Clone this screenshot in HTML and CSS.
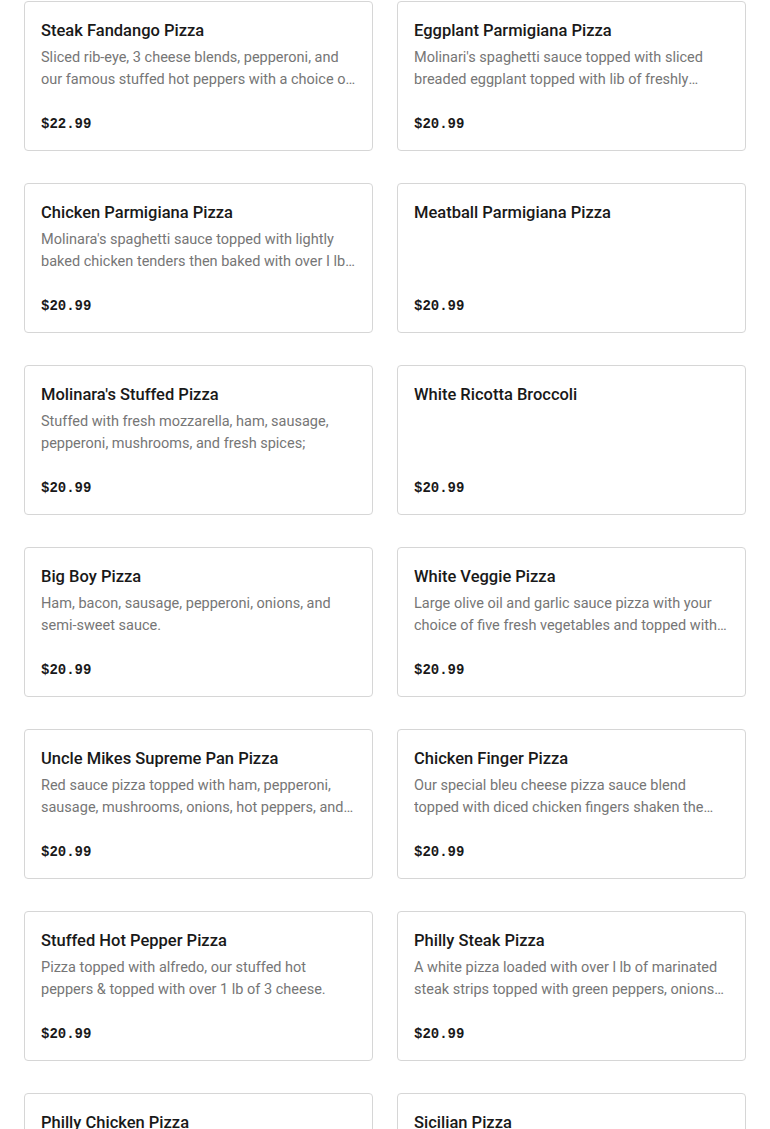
FILE: index.html
```html
<!DOCTYPE html>
<html>
<head>
<meta charset="utf-8">
<link rel="stylesheet" href="styles.css">
</head>
<body>
<div class="menu">
  <div class="card"><div class="title">Steak Fandango Pizza</div><div class="desc">Sliced rib-eye, 3 cheese blends, pepperoni, and our famous stuffed hot peppers with a choice of sauce and toppings.</div><div class="price">$22.99</div></div>
  <div class="card"><div class="title">Eggplant Parmigiana Pizza</div><div class="desc">Molinari's spaghetti sauce topped with sliced breaded eggplant topped with lib of freshly sliced mozzarella.</div><div class="price">$20.99</div></div>
  <div class="card"><div class="title">Chicken Parmigiana Pizza</div><div class="desc">Molinara's spaghetti sauce topped with lightly baked chicken tenders then baked with over I lb of mozzarella.</div><div class="price">$20.99</div></div>
  <div class="card"><div class="title">Meatball Parmigiana Pizza</div><div class="desc"></div><div class="price">$20.99</div></div>
  <div class="card"><div class="title">Molinara's Stuffed Pizza</div><div class="desc">Stuffed with fresh mozzarella, ham, sausage, pepperoni, mushrooms, and fresh spices;</div><div class="price">$20.99</div></div>
  <div class="card"><div class="title">White Ricotta Broccoli</div><div class="desc"></div><div class="price">$20.99</div></div>
  <div class="card"><div class="title">Big Boy Pizza</div><div class="desc">Ham, bacon, sausage, pepperoni, onions, and semi-sweet sauce.</div><div class="price">$20.99</div></div>
  <div class="card"><div class="title">White Veggie Pizza</div><div class="desc">Large olive oil and garlic sauce pizza with your choice of five fresh vegetables and topped with mozzarella cheese.</div><div class="price">$20.99</div></div>
  <div class="card"><div class="title">Uncle Mikes Supreme Pan Pizza</div><div class="desc">Red sauce pizza topped with ham, pepperoni, sausage, mushrooms, onions, hot peppers, and black olives.</div><div class="price">$20.99</div></div>
  <div class="card"><div class="title">Chicken Finger Pizza</div><div class="desc">Our special bleu cheese pizza sauce blend topped with diced chicken fingers shaken the way you like them.</div><div class="price">$20.99</div></div>
  <div class="card"><div class="title">Stuffed Hot Pepper Pizza</div><div class="desc">Pizza topped with alfredo, our stuffed hot peppers &amp; topped with over 1 lb of 3 cheese.</div><div class="price">$20.99</div></div>
  <div class="card"><div class="title">Philly Steak Pizza</div><div class="desc">A white pizza loaded with over l lb of marinated steak strips topped with green peppers, onions and mushrooms.</div><div class="price">$20.99</div></div>
  <div class="card"><div class="title">Philly Chicken Pizza</div><div class="desc">A white pizza loaded with marinated chicken strips topped with green peppers, onions and mushrooms.</div><div class="price">$20.99</div></div>
  <div class="card"><div class="title">Sicilian Pizza</div><div class="desc"></div><div class="price">$20.99</div></div>
</div>
</body>
</html>
```

FILE: styles.css
```css
html, body {
  margin: 0;
  padding: 0;
  background: #ffffff;
}

.menu {
  display: grid;
  grid-template-columns: 1fr 1fr;
  column-gap: 24px;
  row-gap: 32px;
  padding: 1px 24px 24px;
  font-family: Roboto, "Liberation Sans", sans-serif;
}

.card {
  box-sizing: border-box;
  height: 150px;
  border: 1px solid #d6d6d6;
  border-radius: 4px;
  padding: 17px 16px 15px;
  display: flex;
  flex-direction: column;
  background: #fff;
}

.title {
  font-size: 16.5px;
  line-height: 24px;
  font-weight: 500;
  color: #191919;
  white-space: nowrap;
  overflow: hidden;
  text-overflow: ellipsis;
}

.desc {
  margin-top: 4px;
  font-size: 14.5px;
  line-height: 22px;
  color: #767676;
  display: -webkit-box;
  -webkit-box-orient: vertical;
  -webkit-line-clamp: 2;
  overflow: hidden;
}

.price {
  margin-top: auto;
  font-family: "Liberation Mono", "DejaVu Sans Mono", monospace;
  font-weight: 700;
  font-size: 14px;
  line-height: 22px;
  color: #191919;
}
```
